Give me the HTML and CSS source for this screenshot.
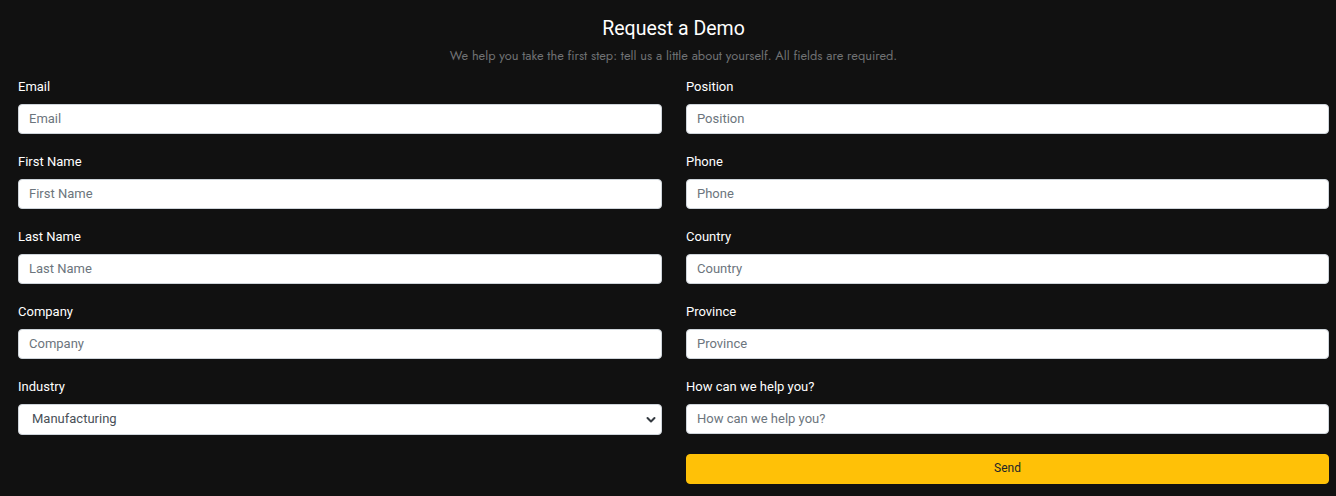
FILE: index.html
```html
<!DOCTYPE html>
<html>
<head>
<meta charset="utf-8">
<link rel="stylesheet" href="styles.css">
</head>
<body>
<div class="page">
  <h1 class="title">Request a Demo</h1>
  <p class="subtitle">We help you take the first step: tell us a little about yourself. All fields are required.</p>
  <form class="form">
    <div class="col">
      <div class="field"><label>Email</label><input type="text" placeholder="Email"></div>
      <div class="field"><label>First Name</label><input type="text" placeholder="First Name"></div>
      <div class="field"><label>Last Name</label><input type="text" placeholder="Last Name"></div>
      <div class="field"><label>Company</label><input type="text" placeholder="Company"></div>
      <div class="field"><label>Industry</label>
        <div class="select-wrap">
          <select><option>Manufacturing</option></select>
          <svg class="chev" width="10" height="8" viewBox="0 0 10 8"><path d="M1.5 2 L5 5.5 L8.5 2" fill="none" stroke="#343a40" stroke-width="2" stroke-linecap="round" stroke-linejoin="round"/></svg>
        </div>
      </div>
    </div>
    <div class="col">
      <div class="field"><label>Position</label><input type="text" placeholder="Position"></div>
      <div class="field"><label>Phone</label><input type="text" placeholder="Phone"></div>
      <div class="field"><label>Country</label><input type="text" placeholder="Country"></div>
      <div class="field"><label>Province</label><input type="text" placeholder="Province"></div>
      <div class="field"><label>How can we help you?</label><input type="text" placeholder="How can we help you?"></div>
      <button type="button" class="send">Send</button>
    </div>
  </form>
</div>
</body>
</html>
```

FILE: styles.css
```css
html, body {
  margin: 0;
  padding: 0;
  background: #111111;
}
body {
  font-family: Roboto, "Liberation Sans", Arial, sans-serif;
  color: #ffffff;
}
.page {
  padding: 17px 7px 0 18px;
}
.title {
  margin: 0;
  font-size: 19.5px;
  line-height: 24px;
  font-weight: 400;
  text-align: center;
  color: #ffffff;
}
.subtitle {
  margin: 5px 0 0;
  font-family: Jost, Lato, "Open Sans", sans-serif;
  font-size: 12.8px;
  line-height: 20px;
  color: #707274;
  text-align: center;
}
.form {
  display: grid;
  grid-template-columns: 644px 643px;
  column-gap: 24px;
  margin-top: 10px;
}
.col {
  display: flex;
  flex-direction: column;
  gap: 17px;
}
.field {
  display: flex;
  flex-direction: column;
}
.field label {
  font-size: 13px;
  line-height: 20px;
  font-weight: 400;
  color: #ffffff;
  padding-top: 1px;
  margin-bottom: 7px;
}
.field input, .field select {
  box-sizing: border-box;
  width: 100%;
  height: 30px;
  margin: 0;
  padding: 0 10px 2px;
  border: 1px solid #ced4da;
  border-radius: 4px;
  background: #ffffff;
  font-family: Roboto, "Liberation Sans", Arial, sans-serif;
  font-size: 13px;
  color: #495057;
  outline: none;
}
.field input::placeholder {
  color: #6c757d;
}
.select-wrap {
  position: relative;
}
.field select {
  height: 31px;
  padding: 0 13px 2px;
  appearance: none;
  -webkit-appearance: none;
  color: #495057;
}
.chev {
  position: absolute;
  right: 6px;
  top: 12px;
  pointer-events: none;
}
.send {
  margin-top: 3px;
  height: 30px;
  border: 1px solid #ffc107;
  border-radius: 4px;
  background: #ffc107;
  color: #212529;
  font-family: Roboto, "Liberation Sans", Arial, sans-serif;
  font-size: 12px;
  padding: 0 0 2px;
  cursor: pointer;
}
```
